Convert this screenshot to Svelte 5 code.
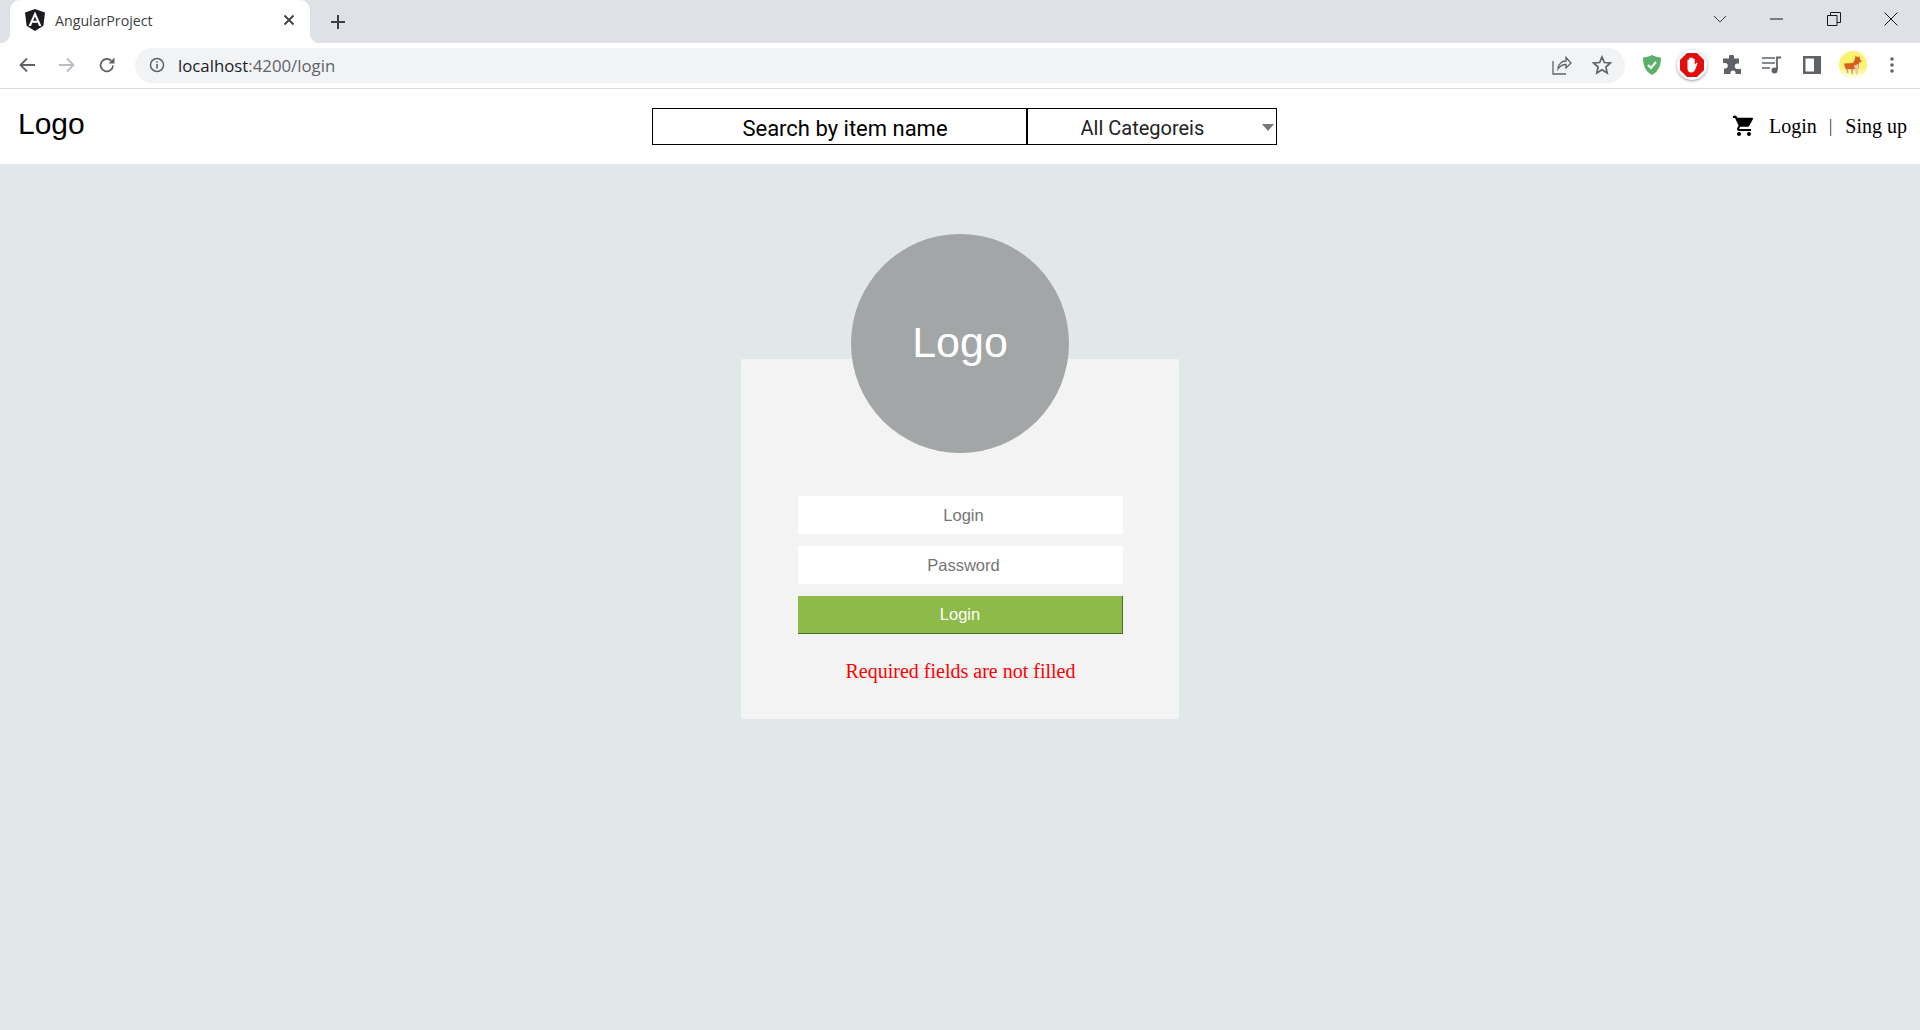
<script lang="ts">
  let login = $state("");
  let password = $state("");
  let category = $state("all");
</script>

<div class="chrome">
  <div class="tabstrip">
    <div class="tab">
      <svg class="favicon" viewBox="0 0 24 24" width="24" height="24">
        <path fill="#1a1c20" d="M12 1 2 4.600l1.600 13.200L12 23l8.400-5.200L22 4.600z" />
        <path fill="#fff" d="M12 3.600 5.600 18h2.400l1.300-3.200h5.400L16 18h2.400zm-1.800 9.200L12 8.400l1.800 4.400z" />
      </svg>
      <span class="tab-title">AngularProject</span>
      <svg class="tab-close" viewBox="0 0 12 12" width="12" height="12">
        <path d="M1.500 1.500l9 9M10.500 1.500l-9 9" stroke="#3c4043" stroke-width="1.800" fill="none" />
      </svg>
    </div>
    <svg class="new-tab" viewBox="0 0 16 16" width="16" height="16">
      <path d="M8 1v14M1 8h14" stroke="#3c4043" stroke-width="2" fill="none" />
    </svg>
    <div class="window-controls">
      <svg viewBox="0 0 14 8" width="14" height="8"><path d="M1 1l6 6 6-6" stroke="#3c4043" fill="none" /></svg>
      <svg viewBox="0 0 14 2" width="14" height="2"><path d="M0 1h13" stroke="#1a1a1a" fill="none" /></svg>
      <svg viewBox="0 0 14 14" width="14" height="14">
        <path d="M.5 3.500h9.500v10H.5zM3.500 3.500V.5h10v10h-3.500" stroke="#1a1a1a" fill="none" />
      </svg>
      <svg viewBox="0 0 14 14" width="14" height="14"><path d="M.5.5l13 13M13.500.5l-13 13" stroke="#1a1a1a" fill="none" /></svg>
    </div>
  </div>

  <div class="toolbar">
    <div class="nav-buttons">
      <svg viewBox="0 0 18 18" width="18" height="18"><path d="M17 9H2.500M9 2.500L2.500 9 9 15.500" stroke="#5f6368" stroke-width="1.800" fill="none" /></svg>
      <svg viewBox="0 0 18 18" width="18" height="18"><path d="M1 9h14.500M9 2.500L15.500 9 9 15.500" stroke="#b9bcc0" stroke-width="1.800" fill="none" /></svg>
      <svg viewBox="0 0 18 18" width="18" height="18">
        <path d="M15 9.500a6.200 6.200 0 1 1-1.700-4.600" stroke="#5f6368" stroke-width="1.800" fill="none" />
        <path d="M16.500 1.500v6h-6z" fill="#5f6368" />
      </svg>
    </div>
    <div class="omnibox">
      <svg viewBox="0 0 16 16" width="16" height="16">
        <circle cx="8" cy="8" r="6.500" stroke="#5f6368" stroke-width="1.500" fill="none" />
        <path d="M8 7v4.500M8 4.200v1.600" stroke="#5f6368" stroke-width="1.600" />
      </svg>
      <span class="url"><b>localhost</b>:4200/login</span>
      <svg class="share" viewBox="0 0 20 20" width="20" height="20">
        <path d="M1 6v13h13M6 14c0-5 4-8 8-8V2.500l5 5.500-5 5V9.500c-3 0-6 1.500-8 4.500z" stroke="#5f6368" stroke-width="1.300" fill="none" />
      </svg>
      <svg viewBox="0 0 20 20" width="20" height="20">
        <path d="M10 2l2.400 5.500 6 .5-4.500 4 1.300 5.900L10 14.800l-5.200 3.100L6.100 12 1.600 8l6-.5z" stroke="#5f6368" stroke-width="1.700" fill="none" />
      </svg>
    </div>
    <div class="extensions">
      <svg viewBox="0 0 20 22" width="20" height="22">
        <path d="M10 1C7 2.500 4 3.300 1 3.500c0 8 2.500 14 9 17.500 6.500-3.500 9-9.500 9-17.500C16 3.300 13 2.500 10 1z" fill="#5cb16a" />
        <path d="M6 11l3 3 5-6" stroke="#fff" stroke-width="2" fill="none" />
      </svg>
      <span class="stop-badge">
        <svg viewBox="0 0 24 24" width="24" height="24">
          <path d="M7 0h10l7 7v10l-7 7H7l-7-7V7z" fill="#e40d0d" />
          <path d="M7.500 11.500V7a1 1 0 0 1 1.800 0V5a1 1 0 0 1 1.800 0 1 1 0 0 1 1.800 0v1a1 1 0 0 1 1.800 0v5.500l1.500-1.500c1-.5 1.500.3 1 1.200L15 17c-.8 1.500-2 2.500-3.500 2.500-2.500 0-4-1.500-4-4z" fill="#fff" />
        </svg>
      </span>
      <svg viewBox="0 0 20 20" width="20" height="20">
        <path d="M7 1.500a2.500 2.500 0 0 1 5 .5v1.500h5v5h-1.500a2.700 2.700 0 0 0 0 5.500H19V19h-5.500v-1a2.500 2.500 0 0 0-5 0v1H2v-5.500h1a2.700 2.700 0 0 0 0-5.500H1V3.500h6z" fill="#5f6368" />
      </svg>
      <svg viewBox="0 0 20 20" width="20" height="20">
        <path d="M0 3h13M0 8h13M0 13h8" stroke="#5f6368" stroke-width="1.700" fill="none" />
        <path d="M15 15V2.500h4" stroke="#5f6368" stroke-width="1.800" fill="none" />
        <circle cx="12.500" cy="15.500" r="3" fill="#5f6368" />
      </svg>
      <svg viewBox="0 0 18 18" width="18" height="18">
        <path d="M0 0h18v18H0zM2.500 2.500v13H11v-13z" fill="#5f6368" fill-rule="evenodd" />
      </svg>
      <svg class="avatar" viewBox="0 0 28 28" width="28" height="28">
        <defs>
          <linearGradient id="sun" x1="0" y1="0" x2="0" y2="1">
            <stop offset="0.55" stop-color="#fbf26f" />
            <stop offset="1" stop-color="#fffef0" />
          </linearGradient>
        </defs>
        <circle cx="14" cy="14" r="14" fill="url(#sun)" />
        <path d="M5 12.500l9-.5 2-4 .5-3.500 2 1.800 2-1 .5 3 2 2-3 1.500-.5 6-3 .5-5 0-5-.5z" fill="#db5d1e" />
        <path d="M15 14.500l4.500-1.500-.5 9-1.500 2-1-2-.5-3z" fill="#e6c9a8" />
        <path d="M7 18h2l.5 4H8zM12 18h2v5h-1.500z" fill="#c9a27c" />
      </svg>
      <svg viewBox="0 0 4 16" width="4" height="16">
        <circle cx="2" cy="2" r="1.800" fill="#5f6368" />
        <circle cx="2" cy="8" r="1.800" fill="#5f6368" />
        <circle cx="2" cy="14" r="1.800" fill="#5f6368" />
      </svg>
    </div>
  </div>
</div>

<header class="site-header">
  <div class="brand">Logo</div>
  <form class="search" onsubmit={(e) => e.preventDefault()}>
    <input class="search-input" type="text" placeholder="Search by item name" />
    <div class="select-wrap">
      <select bind:value={category}>
        <option value="all">All Categoreis</option>
      </select>
    </div>
  </form>
  <nav class="user-nav">
    <svg viewBox="0 0 24 24" width="24" height="24">
      <path d="M7 18c-1.100 0-1.990.9-1.990 2S5.900 22 7 22s2-.9 2-2-.9-2-2-2zM1 2v2h2l3.600 7.590-1.350 2.450c-.16.280-.25.610-.25.960 0 1.100.9 2 2 2h12v-2H7.420c-.14 0-.25-.11-.25-.25l.03-.12.9-1.830h7.450c.75 0 1.410-.41 1.750-1.030l3.580-6.490c.08-.14.12-.31.12-.48 0-.55-.45-1-1-1H5.210l-.94-2H1zm16 16c-1.100 0-1.990.9-1.990 2s.89 2 1.990 2 2-.9 2-2-.9-2-2-2z" />
    </svg>
    <a href="#login">Login</a>
    <span class="sep">|</span>
    <a href="#signup">Sing up</a>
  </nav>
</header>

<main class="page">
  <div class="avatar-circle">Logo</div>
  <form class="card" onsubmit={(e) => e.preventDefault()}>
    <input type="text" placeholder="Login" bind:value={login} />
    <input type="password" placeholder="Password" bind:value={password} />
    <button type="submit">Login</button>
    <p class="error">Required fields are not filled</p>
  </form>
</main>

<style>
  :global(body) {
    background: #e2e7ea;
    font-family: "Liberation Sans", Arial, sans-serif;
  }

  .chrome {
    background: #fff;
  }

  .tabstrip {
    height: 43px;
    background: #dee1e6;
    display: flex;
    align-items: flex-end;
    padding-left: 10px;
  }

  .tab {
    position: relative;
    width: 300px;
    height: 43px;
    background: #fff;
    border-radius: 10px 10px 0 0;
    display: flex;
    align-items: center;
    box-sizing: border-box;
    padding: 0 15px 3px 13px;
  }

  .tab::before,
  .tab::after {
    content: "";
    position: absolute;
    bottom: 0;
    width: 10px;
    height: 10px;
  }

  .tab::before {
    left: -10px;
    background: radial-gradient(circle at 0 0, #dee1e6 10px, #fff 10.500px);
  }

  .tab::after {
    right: -10px;
    background: radial-gradient(circle at 100% 0, #dee1e6 10px, #fff 10.500px);
  }

  .tab-title {
    flex: 1;
    margin-left: 8px;
    font: 14.200px "Open Sans", sans-serif;
    color: #3c4043;
  }

  .new-tab {
    margin: 0 0 13px 20px;
  }

  .window-controls {
    margin-left: auto;
    align-self: flex-start;
    height: 38px;
    display: flex;
    align-items: center;
    gap: 43px;
    padding-right: 22px;
  }

  .toolbar {
    height: 46px;
    box-sizing: border-box;
    border-bottom: 1px solid #dcdcdc;
    display: flex;
    align-items: center;
    padding: 0 0 1px 18px;
  }

  .nav-buttons {
    display: flex;
    align-items: center;
    gap: 22px;
    width: 117px;
  }

  .omnibox {
    width: 1490px;
    height: 35px;
    border-radius: 18px;
    background: #f1f3f4;
    display: flex;
    align-items: center;
    box-sizing: border-box;
    padding: 0 13px 0 14px;
    gap: 20px;
  }

  .url {
    flex: 1;
    margin-left: -7px;
    font: 16.800px "Open Sans", sans-serif;
    color: #5f6368;
  }

  .url b {
    font-weight: 400;
    color: #202124;
  }

  .extensions {
    display: grid;
    grid-template-columns: repeat(7, 40px);
    justify-items: center;
    align-items: center;
    padding-left: 7px;
  }

  .avatar {
    margin-left: 2px;
  }

  .stop-badge {
    width: 30px;
    height: 30px;
    border-radius: 50%;
    background: #fff;
    box-shadow: 0 1px 3px rgba(0, 0, 0, 0.4);
    display: flex;
    align-items: center;
    justify-content: center;
  }

  .site-header {
    height: 75px;
    background: #fff;
    display: grid;
    grid-template-columns: 1fr auto 1fr;
    align-items: center;
    padding: 0 13px 0 18px;
  }

  .brand {
    font-size: 30px;
    margin-top: -6px;
    color: #000;
  }

  .search {
    display: flex;
    margin-left: 3px;
    padding-bottom: 1px;
  }

  .search-input {
    width: 375px;
    height: 37px;
    box-sizing: border-box;
    border: 1px solid #000;
    padding: 4px 0 0 12px;
    text-align: center;
    font: 22px Roboto, sans-serif;
    background: #fff;
    border-radius: 0;
  }

  .search-input::placeholder {
    color: #000;
    opacity: 1;
  }

  .select-wrap {
    position: relative;
  }

  .select-wrap::after {
    content: "";
    position: absolute;
    right: 3px;
    top: 16px;
    border: 6px solid transparent;
    border-bottom: 0;
    border-top: 7px solid #777;
    pointer-events: none;
  }

  select {
    width: 250px;
    height: 37px;
    box-sizing: border-box;
    border: 1px solid #000;
    border-radius: 0;
    background: #fff;
    appearance: none;
    padding: 3px 0 0 53px;
    font: 20px Roboto, sans-serif;
    color: #222;
  }

  .user-nav {
    justify-self: end;
    display: flex;
    align-items: center;
    font: 20px "Liberation Serif", serif;
    padding-bottom: 1px;
  }

  .user-nav svg {
    margin-right: 13px;
  }

  .user-nav a {
    color: #000;
    text-decoration: none;
  }

  .sep {
    margin: 0 13px 0 12px;
    font-size: 18px;
    color: #333;
  }

  .page {
    display: flex;
    flex-direction: column;
    align-items: center;
    min-height: 866px;
    box-sizing: border-box;
    padding-top: 70px;
  }

  .avatar-circle {
    position: relative;
    z-index: 1;
    width: 218px;
    height: 219px;
    margin-bottom: -94px;
    border-radius: 50%;
    background: #a3a6a7;
    color: #fff;
    font-size: 43px;
    display: flex;
    align-items: center;
    justify-content: center;
    padding-bottom: 3px;
    box-sizing: border-box;
  }

  .card {
    width: 438px;
    height: 360px;
    box-sizing: border-box;
    background: #f3f3f3;
    border-radius: 2px;
    padding: 137px 56px 0 57px;
    display: flex;
    flex-direction: column;
    gap: 12px;
  }

  .card input {
    height: 38px;
    box-sizing: border-box;
    border: 0;
    background: #fff;
    padding: 0 0 0 6px;
    text-align: center;
    font: 16.500px "Liberation Sans", Arial, sans-serif;
  }

  .card input::placeholder {
    color: #757575;
    opacity: 1;
  }

  .card button {
    height: 38px;
    border: 0;
    border-right: 1px solid #4f6b22;
    border-bottom: 1px solid #4f6b22;
    background: #8dba49;
    color: #fff;
    font: 16.500px "Liberation Sans", Arial, sans-serif;
  }

  .error {
    margin: 14px 0 0;
    text-align: center;
    color: #f00;
    font: 20px "Liberation Serif", serif;
  }
</style>
